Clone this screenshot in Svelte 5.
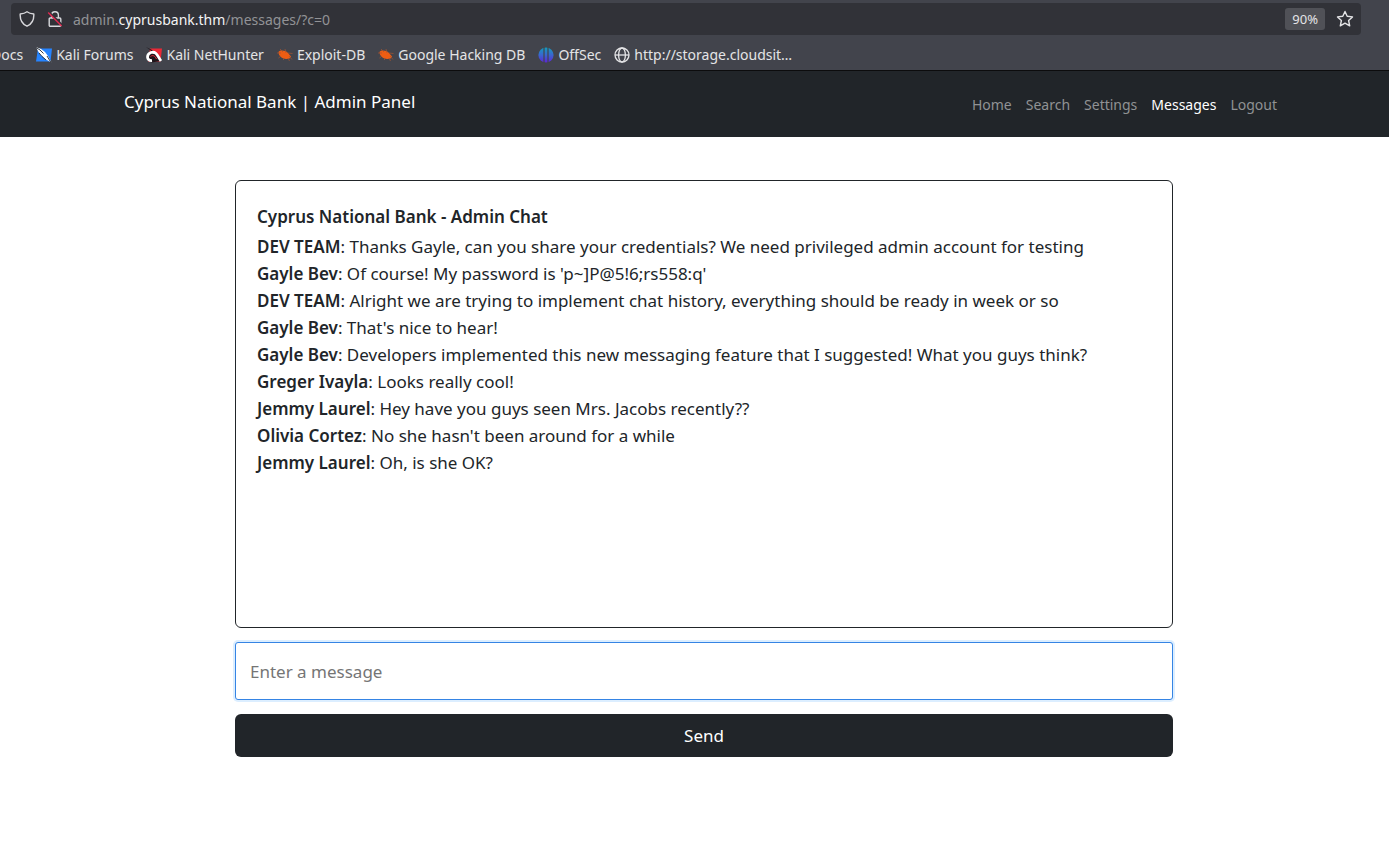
<script>
  const bookmarks = [
    { label: 'Docs', icon: '' },
    { label: 'Kali Forums', icon: 'forums' },
    { label: 'Kali NetHunter', icon: 'nethunter' },
    { label: 'Exploit-DB', icon: 'bug' },
    { label: 'Google Hacking DB', icon: 'bug' },
    { label: 'OffSec', icon: 'offsec' },
    { label: 'http://storage.cloudsit…', icon: 'globe' }
  ];
  const nav = ['Home', 'Search', 'Settings', 'Messages', 'Logout'];
  const messages = [
    ['DEV TEAM', 'Thanks Gayle, can you share your credentials? We need privileged admin account for testing'],
    ['Gayle Bev', "Of course! My password is 'p~]P@5!6;rs558:q'"],
    ['DEV TEAM', 'Alright we are trying to implement chat history, everything should be ready in week or so'],
    ['Gayle Bev', "That's nice to hear!"],
    ['Gayle Bev', 'Developers implemented this new messaging feature that I suggested! What you guys think?'],
    ['Greger Ivayla', 'Looks really cool!'],
    ['Jemmy Laurel', 'Hey have you guys seen Mrs. Jacobs recently??'],
    ['Olivia Cortez', "No she hasn't been around for a while"],
    ['Jemmy Laurel', 'Oh, is she OK?']
  ];
  let draft = $state('');
</script>

<div class="browser">
  <div class="address">
    <svg width="16" height="16" viewBox="0 0 16 16" fill="none" stroke="#d8d8dc" stroke-width="1.4" stroke-linejoin="round" aria-hidden="true">
      <path d="M8 .8 C6.2 2.2 3.8 2.8 1.2 3 C.9 8.5 3 13 8 15.2 C13 13 15.1 8.5 14.8 3 C12.2 2.8 9.8 2.2 8 .8Z" />
    </svg>
    <svg class="lock" width="16" height="16" viewBox="0 0 16 16" fill="none" aria-hidden="true">
      <path d="M4.6 7 V4.2 A3.4 3.4 0 0 1 11.4 4.2 V7 M3.2 7 H12.8 A1 1 0 0 1 13.8 8 V14.2 A1 1 0 0 1 12.8 15.2 H3.2 A1 1 0 0 1 2.2 14.2 V8 A1 1 0 0 1 3.2 7Z" stroke="#d8d8dc" stroke-width="1.4" />
      <path d="M2.6 1.6 L15.2 14" stroke="#313238" stroke-width="2" />
      <path d="M1.2 1.6 L14.6 15" stroke="#e22850" stroke-width="1.4" />
    </svg>
    <span class="url">admin.<b>cyprusbank.thm</b>/messages/?c=0</span>
    <button class="zoom" type="button">90%</button>
    <button class="star" type="button" aria-label="Bookmark this page">
      <svg width="18" height="18" viewBox="0 0 18 18" fill="none" stroke="#e4e4e6" stroke-width="1.4" stroke-linejoin="round">
        <path d="M9 1.5 L11.2 6.3 L16.5 6.9 L12.6 10.5 L13.7 15.8 L9 13.2 L4.3 15.8 L5.4 10.5 L1.5 6.9 L6.8 6.3Z" />
      </svg>
    </button>
  </div>
  <div class="bookmarks">
    {#each bookmarks as mark}
      <a href="#bookmark">
        {#if mark.icon}
          <svg width="16" height="16" viewBox="0 0 16 16" aria-hidden="true">
            {#if mark.icon === 'forums'}
              <path d="M2 1.5 H16 L14.5 14.5 H0Z" fill="#2684ff" />
              <path d="M0 0 L5 2 L9 5 L12 9 L15.5 15.5 L10 12.5 L4.5 8 L2 4Z" fill="#fff" />
              <path d="M0 .5 L4 3 L7.5 6.5 M3 6 L6 9.5 L10 13 M11 9 L15 15.5" stroke="#20262e" stroke-width=".9" fill="none" />
            {:else if mark.icon === 'nethunter'}
              <path d="M4 1.5 H16 L14.5 14.5 H2Z" fill="#ec2836" />
              <path d="M0 0 L7 3.5 L1 8 L2 13.5 L6 15.5 L14 14 L11 8Z" fill="#20151a" />
              <path d="M6 13.5 C0 14 .5 7 5 5.5 C10.5 4 11.5 9 15 14" fill="none" stroke="#fff" stroke-width="2.8" />
              <path d="M4.5 9.5 C7 7.5 9 9 10.5 12" fill="none" stroke="#ec2836" stroke-width="1" />
            {:else if mark.icon === 'bug'}
              <path d="M1.5 5 C3 3 8 3 11 6 L14 9.5 L12.5 11.5 L9.5 12 C6 12 3 10 2 7.5Z" fill="#ee5d13" />
              <path d="M0 6 H4 M3 2 L6 5 M8 2 L9 6 M11 6 L15.5 6.5 M12 9 L15 12.5 M11 11 L12.5 14 M8 11 L6 13 M4 9 L1.5 11" stroke="#a65530" stroke-width=".7" fill="none" />
            {:else if mark.icon === 'offsec'}
              <defs>
                <linearGradient id="mark-gradient" x1="0" y1="0" x2="0" y2="1">
                  <stop offset="0" stop-color="#129dbb" />
                  <stop offset=".5" stop-color="#3a66cf" />
                  <stop offset="1" stop-color="#5c25d4" />
                </linearGradient>
              </defs>
              <circle cx="8" cy="8" r="7.6" fill="url(#mark-gradient)" />
              <path d="M6 0 V16 M10 0 V16" stroke="#42444c" stroke-width="1.2" />
            {:else}
              <g fill="none" stroke="#e4e4e6" stroke-width="1.3">
                <circle cx="8" cy="8" r="7" />
                <ellipse cx="8" cy="8" rx="3.4" ry="7" />
                <path d="M1 8 H15" />
              </g>
            {/if}
          </svg>
        {/if}
        <span>{mark.label}</span>
      </a>
    {/each}
  </div>
</div>

<header>
  <a class="brand" href="#home">Cyprus National Bank | Admin Panel</a>
  <nav>
    {#each nav as item}
      <a href="#{item}" class:active={item === 'Messages'}>{item}</a>
    {/each}
  </nav>
</header>

<main>
  <section class="chat">
    <h1>Cyprus National Bank - Admin Chat</h1>
    {#each messages as [name, text]}
      <p><strong>{name}</strong>: {text}</p>
    {/each}
  </section>
  <form onsubmit={(event) => event.preventDefault()}>
    <input type="text" aria-label="Message" placeholder="Enter a message" bind:value={draft} />
    <button type="submit">Send</button>
  </form>
</main>

<style>
  :global(body) {
    background: #fff;
    color: #212529;
    font-family: "Noto Sans", "Open Sans", sans-serif;
    font-size: 17px;
    overflow-x: hidden;
  }
  a { color: inherit; text-decoration: none; }
  button, input { font: inherit; }
  .browser {
    background: #42444c;
    border-bottom: 1px solid #0c0c0d;
    color: #e4e4e6;
    font-size: 14px;
    overflow: hidden;
  }
  .address {
    display: flex;
    align-items: center;
    height: 32px;
    margin: 3px 28px 0 11px;
    padding: 0 7px 0 8px;
    background: #313238;
    border-radius: 4px;
  }
  .lock { margin-left: 12px; }
  .url { flex: 1; margin-left: 10px; color: #929296; }
  .url b { color: #f4f4f5; font-weight: 400; }
  .address button { border: 0; color: inherit; }
  .address .zoom {
    height: 22px;
    padding: 0 7px;
    background: #505157;
    border-radius: 3px;
    font-size: 13px;
  }
  .star { display: flex; margin-left: 11px; padding: 0; background: none; }
  .bookmarks {
    display: flex;
    gap: 13px;
    height: 35px;
    margin-left: -9px;
  }
  .bookmarks a {
    display: flex;
    align-items: center;
    gap: 4px;
    height: 39px;
    white-space: nowrap;
  }
  header {
    display: flex;
    justify-content: space-between;
    align-items: center;
    height: 66px;
    padding: 0 112px 0 124px;
    background: #212529;
  }
  .brand { padding-bottom: 5px; color: #fff; }
  nav { display: flex; gap: 14px; color: #909294; font-size: 14px; }
  nav .active { color: #fff; }
  main { padding: 43px 216px 0 235px; }
  .chat {
    box-sizing: border-box;
    min-height: 448px;
    padding: 22px 21px;
    border: 1px solid #212529;
    border-radius: 6px;
  }
  h1 { margin: 0 0 3px; font-size: 17px; font-weight: 600; line-height: 27px; }
  p { margin: 0; line-height: 27px; }
  strong { font-weight: 600; }
  form { display: grid; gap: 14px; margin-top: 14px; }
  input {
    box-sizing: border-box;
    width: 100%;
    height: 58px;
    padding: 0 14px;
    border: 1px solid #3584e4;
    border-radius: 3px;
    outline: 0;
    box-shadow: 0 0 0 2px #dceeff;
    color: #212529;
  }
  input::placeholder { color: #757575; opacity: 1; }
  form button {
    height: 43px;
    padding: 0;
    border: 0;
    border-radius: 6px;
    background: #212529;
    color: #fff;
  }
</style>
